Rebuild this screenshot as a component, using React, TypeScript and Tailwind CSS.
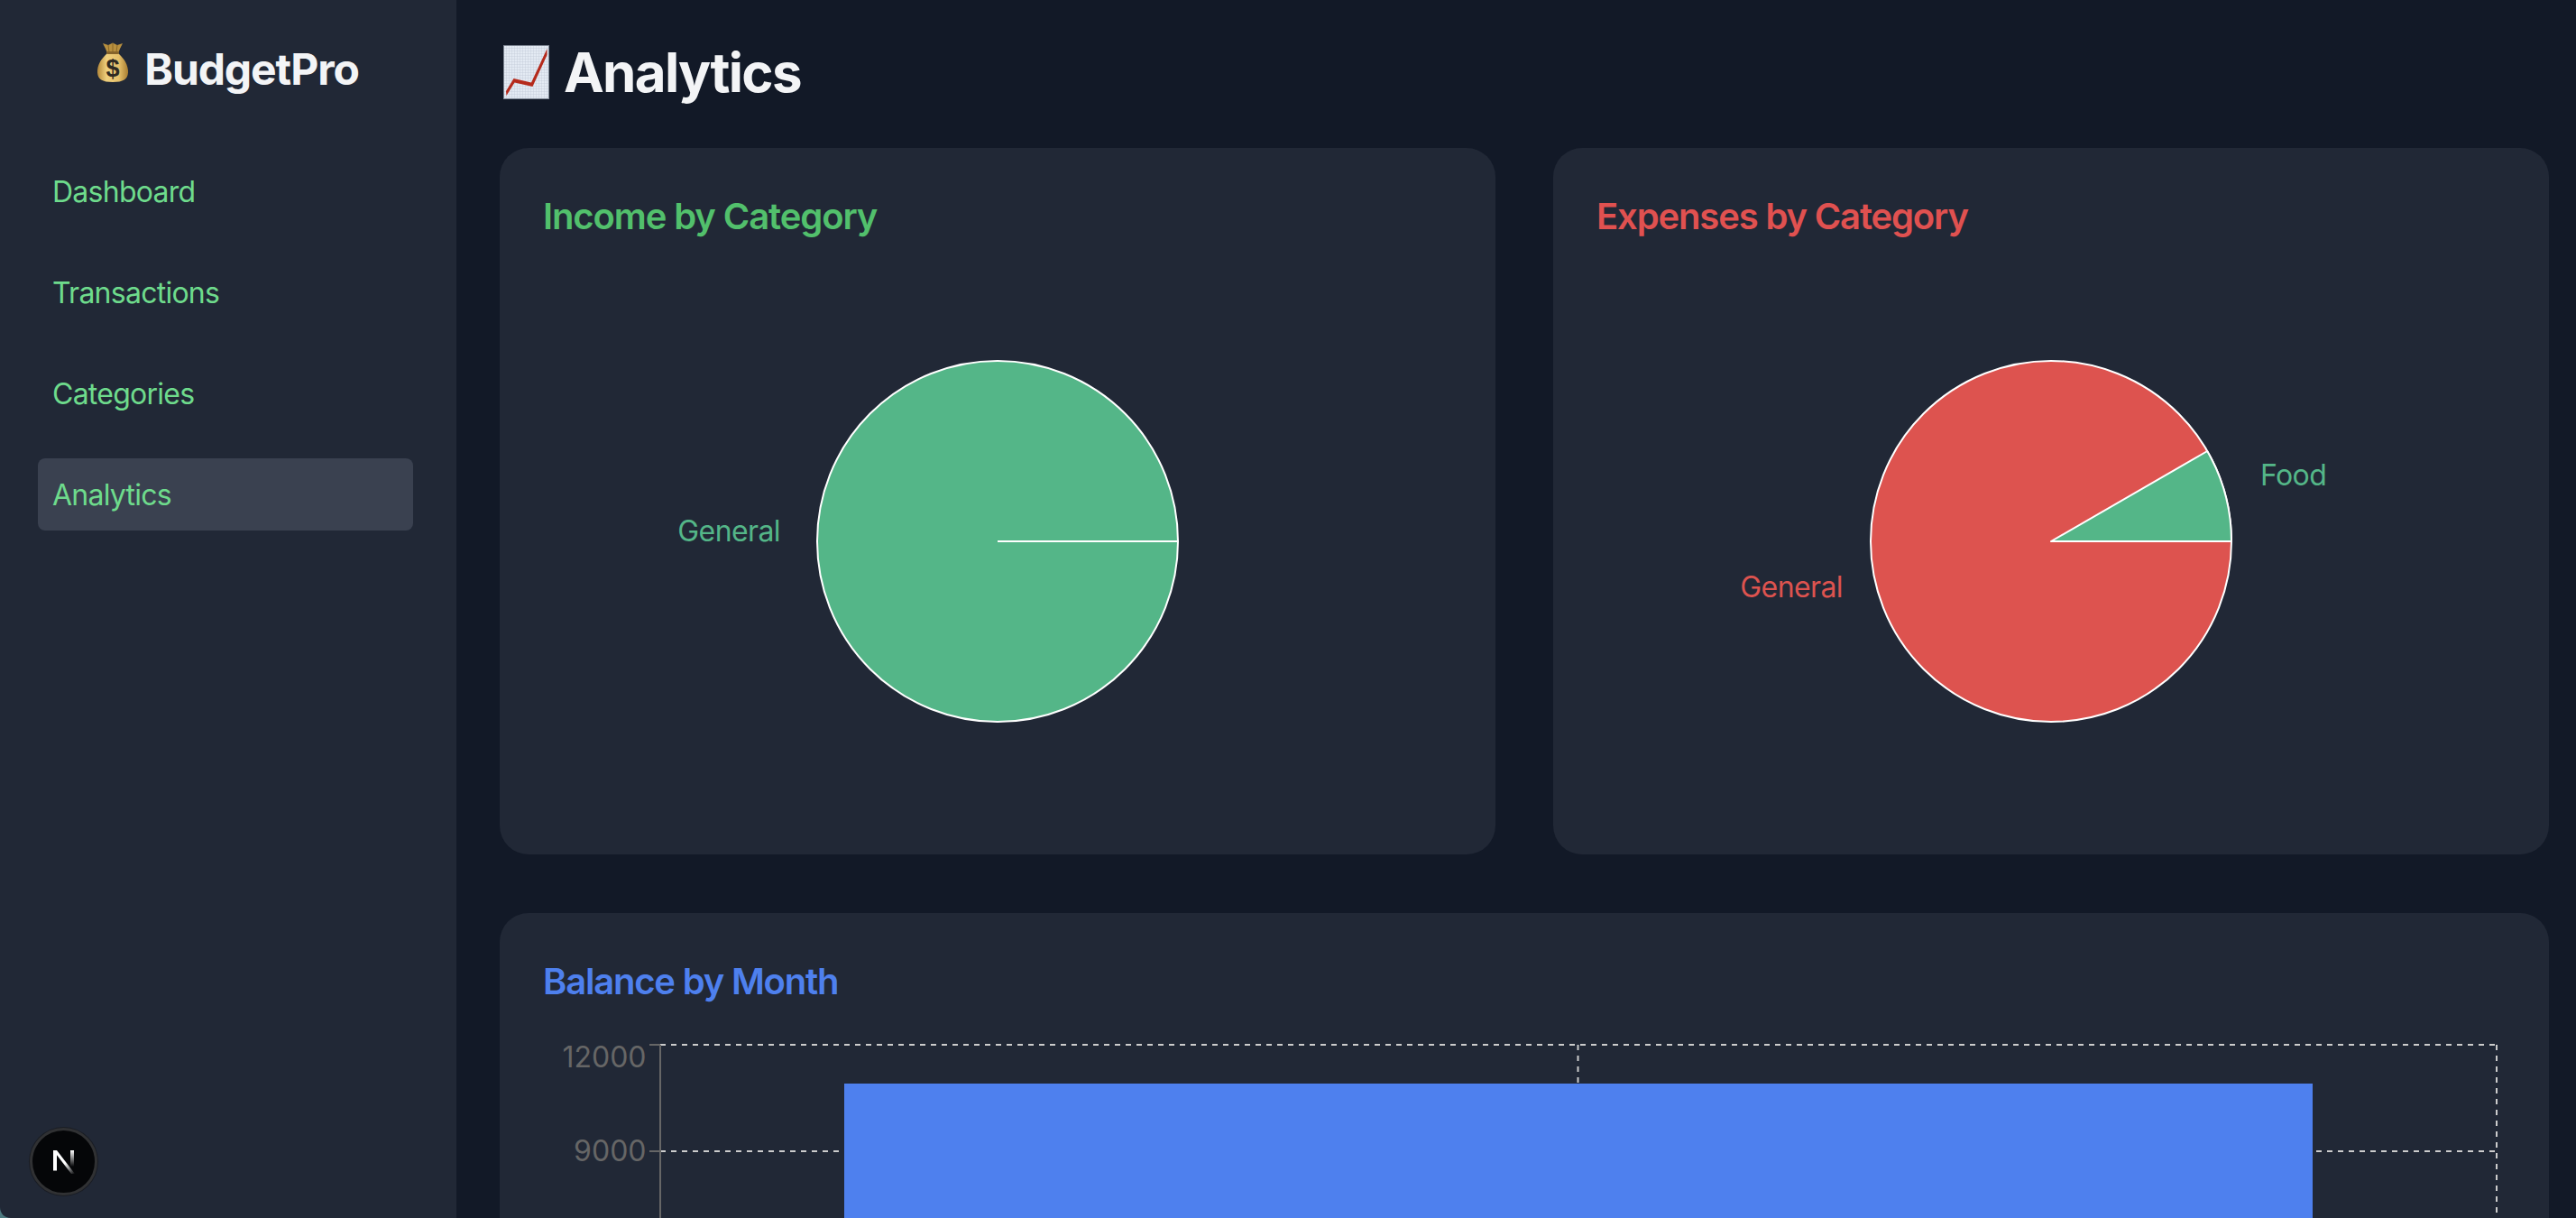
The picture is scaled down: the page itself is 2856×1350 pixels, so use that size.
const navItems = ["Dashboard", "Transactions", "Categories", "Analytics"];

function MoneyBag() {
  return (
    <svg width="34" height="44" viewBox="0 0 34 44" className="shrink-0">
      <defs>
        <linearGradient id="bag" x1="0" y1="0" x2="1" y2="0">
          <stop offset="0" stopColor="#b5893a" />
          <stop offset="0.3" stopColor="#efd07e" />
          <stop offset="0.7" stopColor="#e6c06a" />
          <stop offset="1" stopColor="#a87d30" />
        </linearGradient>
      </defs>
      <path d="M6 1 L12 3 L17 0.5 L22 3 L28 1 L25 7 L23 12 L11 12 L9 7 Z" fill="#b8903f" />
      <path d="M12 3 L13 11 M17 1 L17 11 M22 3 L21 11" stroke="#8a6727" strokeWidth="1" />
      <path d="M11 12 L23 12 C27 16 33 21 34 31 C34.5 40 30 44 17 44 C4 44 -0.5 40 0 31 C1 21 7 16 11 12 Z" fill="url(#bag)" />
      <rect x="10" y="10" width="14" height="3" rx="1.5" fill="#86642a" />
      <text x="17" y="38" textAnchor="middle" fontSize="27" fontWeight="700" fill="#2e2a22" fontFamily="Liberation Sans, sans-serif">$</text>
    </svg>
  );
}

function ChartEmoji() {
  return (
    <svg width="51" height="60" viewBox="0 0 51 60" className="shrink-0">
      <defs>
        <pattern id="paper" width="3" height="3" patternUnits="userSpaceOnUse">
          <rect width="3" height="3" fill="#e3eaf3" />
          <path d="M0 0H3M0 0V3" stroke="#bcc6d4" strokeWidth="0.7" />
        </pattern>
      </defs>
      <rect x="0.5" y="0.5" width="50" height="59" fill="url(#paper)" stroke="#7e8794" />
      <path d="M3 51 L11.5 37 L31 41.5 L48.5 4 L48.5 11 L32.5 46 L12.5 41.5 L3.5 56 Z" fill="#b52a1c" />
    </svg>
  );
}

function NextBadge() {
  return (
    <div className="absolute left-[33px] bottom-[25px] flex h-[75px] w-[75px] items-center justify-center rounded-full border-[3px] border-[#303133] bg-[#050608] shadow-[0_0_0_1px_#1a1d24]">
      <svg width="26" height="28" viewBox="0 0 26 28">
        <defs>
          <linearGradient id="nRight" x1="0" y1="0" x2="0" y2="1">
            <stop offset="0" stopColor="#fff" />
            <stop offset="1" stopColor="#fff" stopOpacity="0" />
          </linearGradient>
          <linearGradient id="nDiag" x1="0" y1="0" x2="1" y2="1">
            <stop offset="0.55" stopColor="#fff" />
            <stop offset="1" stopColor="#fff" stopOpacity="0" />
          </linearGradient>
        </defs>
        <path d="M1 1 H5 V23.5 H1 Z" fill="#fff" />
        <path d="M1 1 H5 L25 27 H21 Z" fill="url(#nDiag)" />
        <rect x="20" y="1" width="4" height="18" fill="url(#nRight)" />
      </svg>
    </div>
  );
}

function Pie({ children }: { children: React.ReactNode }) {
  return (
    <svg width="1008" height="600" viewBox="0 0 1008 600" className="block w-full tracking-[-0.6px]" fontFamily="Inter, sans-serif" fontSize="32">
      {children}
    </svg>
  );
}

function IncomeCard() {
  return (
    <section className="h-[783px] rounded-[32px] bg-[#212836] p-12">
      <h2 className="mb-8 text-[40px] leading-[56px] font-semibold tracking-[-1.1px] text-[#52c06c]">Income by Category</h2>
      <Pie>
        <circle cx="504" cy="300" r="200" fill="#54b688" stroke="#fff" strokeWidth="2" />
        <line x1="504" y1="300" x2="704" y2="300" stroke="#fff" strokeWidth="2" />
        <text x="263" y="291" textAnchor="end" dominantBaseline="middle" fill="#54b688">General</text>
      </Pie>
    </section>
  );
}

function ExpenseCard() {
  return (
    <section className="h-[783px] rounded-[32px] bg-[#212836] p-12">
      <h2 className="mb-8 text-[40px] leading-[56px] font-semibold tracking-[-1.15px] text-[#e05150]">Expenses by Category</h2>
      <Pie>
        <circle cx="504" cy="300" r="200" fill="#dd534f" stroke="#fff" strokeWidth="2" />
        <path d="M504 300 L704 300 A200 200 0 0 0 677.2 200 Z" fill="#54b688" stroke="#fff" strokeWidth="2" strokeLinejoin="round" />
        <text x="273" y="353" textAnchor="end" dominantBaseline="middle" fill="#dd534f">General</text>
        <text x="736" y="229" dominantBaseline="middle" fill="#54b688">Food</text>
      </Pie>
    </section>
  );
}

function BalanceCard() {
  return (
    <section className="rounded-[32px] bg-[#212836] p-12">
      <h2 className="mb-8 text-[40px] leading-[56px] font-semibold tracking-[-1.2px] text-[#4e80ee]">Balance by Month</h2>
      <svg width="2176" height="800" viewBox="0 0 2176 800" className="block w-full" fontFamily="Inter, sans-serif" fontSize="32">
        <g stroke="#ccc" strokeWidth="2" strokeDasharray="6 6" fill="none">
          <line x1="130" y1="10" x2="2166" y2="10" />
          <line x1="130" y1="128" x2="2166" y2="128" />
          <line x1="1147.5" y1="10" x2="1147.5" y2="800" />
          <line x1="2166" y1="10" x2="2166" y2="800" />
        </g>
        <rect x="334" y="53" width="1628" height="747" fill="#4e80ee" />
        <g stroke="#666" strokeWidth="2">
          <line x1="130" y1="10" x2="130" y2="800" />
          <line x1="118" y1="10" x2="130" y2="10" />
          <line x1="118" y1="128" x2="130" y2="128" />
        </g>
        <g fill="#666" textAnchor="end" dominantBaseline="middle">
          <text x="114.5" y="26">12000</text>
          <text x="114.5" y="130">9000</text>
        </g>
      </svg>
    </section>
  );
}

export default function App() {
  return (
    <div className="relative flex h-[1350px] overflow-hidden bg-[#121927] font-['Inter',sans-serif]">
      <aside className="flex w-[506px] shrink-0 flex-col bg-[#212836]">
        <div className="flex h-[172px] items-start justify-center gap-[18px] pt-[47px]">
          <MoneyBag />
          <h1 className="text-[48px] leading-[60px] font-bold tracking-[-1.1px] text-[#f3f4f6]">BudgetPro</h1>
        </div>
        <nav className="ml-[42px] flex w-[416px] flex-col gap-8">
          {navItems.map((item) => (
            <a
              key={item}
              className={`flex h-20 items-center rounded-lg px-4 pt-[2px] text-[32px] tracking-[-0.75px] text-[#6edb8c] ${
                item === "Analytics" ? "bg-[#3a4150]" : ""
              }`}
            >
              {item}
            </a>
          ))}
        </nav>
      </aside>

      <main className="min-w-0 flex-1 pt-[44px] pr-[30px] pl-12">
        <div className="mb-12 flex h-[72px] items-center gap-4 pl-1">
          <ChartEmoji />
          <h1 className="text-[60px] leading-[72px] font-bold tracking-[-1.7px] text-[#f3f4f6]">Analytics</h1>
        </div>
        <div className="mb-[65px] grid grid-cols-2 gap-x-16">
          <IncomeCard />
          <ExpenseCard />
        </div>
        <BalanceCard />
      </main>

      <NextBadge />

      {/* window corner of the capture */}
      <svg width="12" height="12" viewBox="0 0 12 12" className="absolute bottom-0 left-0">
        <path d="M0 0 C0 7 5 12 12 12 L0 12 Z" fill="#4d7a80" />
      </svg>
    </div>
  );
}
